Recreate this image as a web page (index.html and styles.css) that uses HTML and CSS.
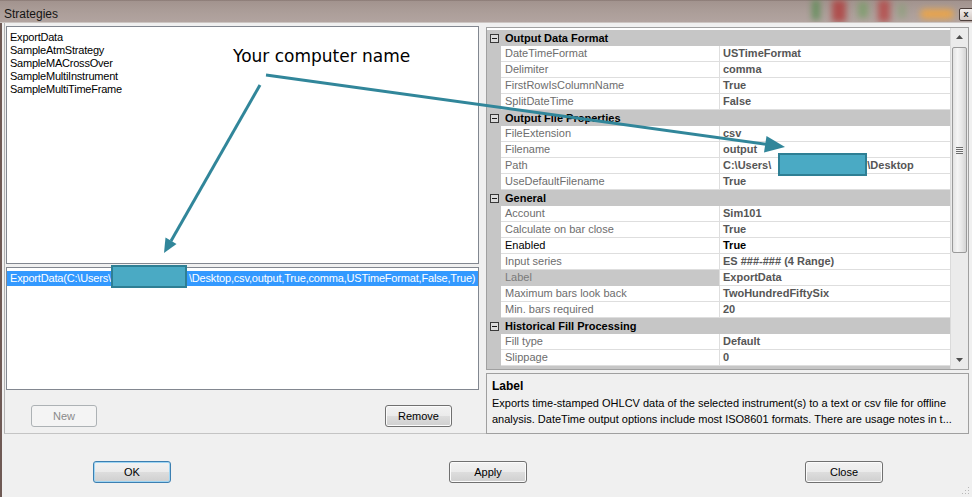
FILE: index.html
```html
<!DOCTYPE html>
<html>
<head>
<meta charset="utf-8">
<title>Strategies</title>
<link rel="stylesheet" href="styles.css">
</head>
<body>
<div class="window">
  <div class="titlebar">
    <div class="glass">
      <span class="blob b1"></span><span class="blob b2"></span><span class="blob b3"></span><span class="blob b4"></span><span class="blob b5"></span><span class="blob b6"></span>
    </div>
    <span class="title">Strategies</span>
    <span class="close-btn">x</span>
  </div>
  <div class="body">
    <div class="panes">
      <div class="left">
        <div class="list list-top">
          <div class="li">ExportData</div>
          <div class="li">SampleAtmStrategy</div>
          <div class="li">SampleMACrossOver</div>
          <div class="li">SampleMultiInstrument</div>
          <div class="li">SampleMultiTimeFrame</div>
        </div>
        <div class="list list-bottom">
          <div class="li sel">ExportData(C:\Users\<span class="gap1"></span>\Desktop,csv,output,True,comma,USTimeFormat,False,True)</div>
        </div>
        <div class="left-buttons">
          <button class="btn disabled btn-new">New</button>
          <button class="btn btn-remove">Remove</button>
        </div>
      </div>
      <div class="right">
        <div class="grid">
          <div class="rows">
            <div class="cat"><span class="minus"></span><span class="cat-name">Output Data Format</span></div>
            <div class="prop"><span class="mg"></span><span class="nm">DateTimeFormat</span><span class="vl">USTimeFormat</span></div>
            <div class="prop"><span class="mg"></span><span class="nm">Delimiter</span><span class="vl">comma</span></div>
            <div class="prop"><span class="mg"></span><span class="nm">FirstRowIsColumnName</span><span class="vl">True</span></div>
            <div class="prop"><span class="mg"></span><span class="nm">SplitDateTime</span><span class="vl">False</span></div>
            <div class="cat"><span class="minus"></span><span class="cat-name">Output File Properties</span></div>
            <div class="prop"><span class="mg"></span><span class="nm">FileExtension</span><span class="vl">csv</span></div>
            <div class="prop"><span class="mg"></span><span class="nm">Filename</span><span class="vl">output</span></div>
            <div class="prop"><span class="mg"></span><span class="nm">Path</span><span class="vl">C:\Users\<span class="gap2"></span>\Desktop</span></div>
            <div class="prop"><span class="mg"></span><span class="nm">UseDefaultFilename</span><span class="vl">True</span></div>
            <div class="cat"><span class="minus"></span><span class="cat-name">General</span></div>
            <div class="prop"><span class="mg"></span><span class="nm">Account</span><span class="vl">Sim101</span></div>
            <div class="prop"><span class="mg"></span><span class="nm">Calculate on bar close</span><span class="vl">True</span></div>
            <div class="prop strong"><span class="mg"></span><span class="nm">Enabled</span><span class="vl">True</span></div>
            <div class="prop"><span class="mg"></span><span class="nm">Input series</span><span class="vl">ES ###-### (4 Range)</span></div>
            <div class="prop selected"><span class="mg"></span><span class="nm">Label</span><span class="vl">ExportData</span></div>
            <div class="prop"><span class="mg"></span><span class="nm">Maximum bars look back</span><span class="vl">TwoHundredFiftySix</span></div>
            <div class="prop"><span class="mg"></span><span class="nm">Min. bars required</span><span class="vl">20</span></div>
            <div class="cat"><span class="minus"></span><span class="cat-name">Historical Fill Processing</span></div>
            <div class="prop"><span class="mg"></span><span class="nm">Fill type</span><span class="vl">Default</span></div>
            <div class="prop"><span class="mg"></span><span class="nm">Slippage</span><span class="vl">0</span></div>
            <div class="cat cat-last"><span class="minus"></span></div>
          </div>
          <div class="scrollbar">
            <div class="sb-arrow"><svg width="7" height="4" viewBox="0 0 7 4"><path d="M0 4 L3.5 0 L7 4 Z" fill="#4d4d4d"/></svg></div>
            <div class="sb-thumb"><span class="grip"></span></div>
            <div class="sb-space"></div>
            <div class="sb-arrow"><svg width="7" height="4" viewBox="0 0 7 4"><path d="M0 0 L3.5 4 L7 0 Z" fill="#4d4d4d"/></svg></div>
          </div>
        </div>
        <div class="desc">
          <div class="desc-title">Label</div>
          <div class="desc-text">Exports time-stamped OHLCV data of the selected instrument(s) to a text or csv file for offline analysis. DateTime output options include most ISO8601 formats. There are usage notes in t...</div>
        </div>
      </div>
    </div>
    <div class="footer">
      <button class="btn default btn-ok">OK</button>
      <button class="btn btn-apply">Apply</button>
      <button class="btn btn-close">Close</button>
      <svg class="grip-corner" width="8" height="8" viewBox="0 0 8 8">
        <rect x="6" y="0" width="1" height="1" fill="#b8b8b8"/>
        <rect x="3" y="3" width="1" height="1" fill="#b8b8b8"/><rect x="6" y="3" width="1" height="1" fill="#b8b8b8"/>
        <rect x="0" y="6" width="1" height="1" fill="#b8b8b8"/><rect x="3" y="6" width="1" height="1" fill="#b8b8b8"/><rect x="6" y="6" width="1" height="1" fill="#b8b8b8"/>
      </svg>
    </div>
  </div>

  <svg class="annot" width="972" height="497" viewBox="0 0 972 497">
    <line x1="260" y1="85" x2="171" y2="241" stroke="#31869a" stroke-width="3"/>
    <polygon points="164,253 176.5,244 165.5,237.5" fill="#31869a"/>
    <line x1="266" y1="75" x2="766" y2="144.3" stroke="#31869a" stroke-width="3"/>
    <polygon points="785,147 764,152.5 766.5,136" fill="#31869a"/>
    <rect x="112" y="266" width="74" height="21" fill="#4aaac4" stroke="#2e7f94" stroke-width="2"/>
    <rect x="779" y="154" width="87" height="21" fill="#4aaac4" stroke="#2e7f94" stroke-width="2"/>
  </svg>
  <div class="annot-text">Your computer name</div>
</div>
</body>
</html>
```

FILE: styles.css
```css
* { box-sizing: border-box; }
html, body { margin: 0; padding: 0; }
body {
  width: 972px;
  height: 497px;
  overflow: hidden;
  background: #f0f0f0;
  font-family: "Liberation Sans", Arial, sans-serif;
  font-size: 11px;
  color: #000;
}
.window {
  position: relative;
  width: 972px;
  height: 497px;
  background: #f0f0f0;
  overflow: hidden;
}

/* title bar */
.titlebar {
  position: relative;
  height: 23px;
  display: flex;
  align-items: flex-start;
  background: linear-gradient(to bottom, #7d6c67 0, #a2938e 1px, #ab9d98 50%, #b2a4a0 100%);
  border-bottom: 1px solid #cdc6c3;
  overflow: hidden;
}
.glass { position: absolute; left: 0; top: 0; width: 972px; height: 23px; }
.blob { position: absolute; display: block; filter: blur(3px); }
.b1 { left: 812px; top: 0; width: 8px; height: 20px; background: #4f8a4a; opacity: .7; }
.b2 { left: 832px; top: 0; width: 14px; height: 22px; background: #b03535; opacity: .75; }
.b3 { left: 858px; top: 2px; width: 10px; height: 16px; background: #6a9f5b; opacity: .6; }
.b4 { left: 878px; top: 0; width: 12px; height: 22px; background: #b83a3a; opacity: .7; }
.b5 { left: 898px; top: 4px; width: 8px; height: 14px; background: #7ea36e; opacity: .5; }
.b6 { left: 920px; top: 9px; width: 34px; height: 10px; background: #eea545; opacity: .9; border-radius: 5px; }
.title {
  position: relative;
  padding-left: 4px;
  padding-top: 2px;
  line-height: 24px;
  font-size: 12px;
  color: #141414;
}
.close-btn {
  position: relative;
  margin-left: auto;
  margin-top: 8px;
  margin-right: -4px;
  width: 17px;
  height: 13px;
  border: 1px solid #4d3f3b;
  border-radius: 2px;
  background: linear-gradient(#f2eeec, #d2c8c4);
  font-size: 9px;
  font-weight: bold;
  line-height: 10px;
  text-align: center;
  color: #222;
  padding-right: 3px;
}

/* body */
.body {
  border-left: 2px solid #6f5a55;
  padding-left: 2px;
}
.panes { display: flex; height: 411px; }
.left {
  width: 482px;
  height: 411px;
  border-left: 1px solid #b4b4b4;
  border-bottom: 1px solid #c4c4c4;
  padding: 3px 0 0 1px;
}
.list {
  width: 473px;
  background: #fff;
  border: 1px solid #828790;
  overflow: hidden;
}
.list-top { height: 238px; padding: 4px 0 0 3px; }
.li { line-height: 13px; height: 13px; letter-spacing: -0.22px; white-space: nowrap; }
.list-bottom { height: 123px; margin-top: 3px; padding-top: 3px; }
.li.sel {
  height: 15px;
  line-height: 15px;
  padding-left: 3px;
  background: #3399ff;
  color: #fff;
  letter-spacing: -0.18px;
}
.gap1 { display: inline-block; width: 78px; }
.left-buttons { display: flex; margin-top: 15px; height: 22px; }

.btn {
  height: 22px;
  padding: 0;
  border: 1px solid #707070;
  border-radius: 3px;
  background: linear-gradient(to bottom, #f2f2f2 0%, #ebebeb 48%, #dddddd 52%, #cfcfcf 100%);
  box-shadow: inset 0 0 0 1px #fbfbfb;
  font-family: "Liberation Sans", Arial, sans-serif;
  font-size: 11px;
  color: #000;
}
.btn.disabled {
  border-color: #adb2b5;
  background: #f4f4f4;
  box-shadow: none;
  color: #8a8a8a;
}
.btn.default {
  border-color: #3c7fb1;
  box-shadow: inset 0 0 0 1px #9fd5f3;
}
.btn-new { width: 66px; margin-left: 25px; }
.btn-remove { width: 67px; margin-left: 288px; }

/* right pane */
.right { width: 483px; padding-top: 4px; }
.grid {
  height: 343px;
  display: flex;
  border: 1px solid #a0a0a0;
  background: #fff;
}
.rows { width: 463px; padding-top: 2px; overflow: hidden; }
.cat {
  display: flex;
  align-items: center;
  height: 16px;
  background: #c6c6c6;
}
.cat-last { align-items: flex-start; }
.cat-last .minus { margin-top: 4px; }
.minus {
  position: relative;
  width: 9px;
  height: 9px;
  margin-left: 3px;
  border: 1px solid #3a3a3a;
  background: #dcdcdc;
  display: flex;
  align-items: center;
  justify-content: center;
}
.minus::after { content: ""; width: 5px; height: 1px; background: #1a1a1a; }
.cat-name { margin-left: 6px; font-weight: bold; color: #000; line-height: 16px; }
.prop { display: flex; height: 16px; }
.mg { width: 14px; background: #c6c6c6; }
.nm {
  width: 219px;
  padding-left: 4px;
  line-height: 15px;
  border-right: 1px solid #dedede;
  border-bottom: 1px solid #dedede;
  color: #6d6d6d;
  white-space: nowrap;
}
.vl {
  flex: 1;
  padding-left: 3px;
  line-height: 15px;
  border-bottom: 1px solid #dedede;
  font-weight: bold;
  color: #565656;
  white-space: nowrap;
}
.prop.strong .nm, .prop.strong .vl { color: #000; }
.prop.selected .nm { background: #c8c8c8; color: #7a7a7a; border-bottom-color: #c8c8c8; }
.gap2 { display: inline-block; width: 96px; }

.scrollbar {
  width: 18px;
  background: #ebebeb;
  border-left: 1px solid #dadada;
  display: flex;
  flex-direction: column;
  align-items: center;
}
.sb-arrow { width: 17px; height: 18px; display: flex; align-items: center; justify-content: center; }
.sb-thumb {
  width: 15px;
  height: 206px;
  margin-top: 1px;
  border: 1px solid #9a9a9a;
  border-radius: 2px;
  background: linear-gradient(to right, #e3e3e3 0%, #f5f5f5 35%, #e6e6e6 70%, #d4d4d4 100%);
  display: flex;
  align-items: center;
  justify-content: center;
}
.grip {
  width: 7px;
  height: 7px;
  background: repeating-linear-gradient(to bottom, #6c6c6c 0, #6c6c6c 1px, #f4f4f4 1px, #f4f4f4 2px);
}
.sb-space { flex: 1; }

.desc {
  height: 61px;
  margin-top: 3px;
  border: 1px solid #a0a0a0;
  background: #f0f0f0;
  padding: 4px 5px 0 5px;
  overflow: hidden;
}
.desc-title { font-size: 12px; font-weight: bold; line-height: 16px; color: #000; }
.desc-text { line-height: 16px; color: #000; width: 462px; margin-top: 1px; }

/* footer */
.footer { position: relative; display: flex; height: 63px; padding-top: 27px; }
.footer .btn { width: 78px; }
.btn-ok { margin-left: 89px; }
.btn-apply { margin-left: 278px; }
.btn-close { margin-left: 278px; }
.grip-corner { position: absolute; right: 2px; bottom: 2px; }

/* annotation overlay */
.annot { position: absolute; left: 0; top: 0; pointer-events: none; }
.annot-text {
  position: absolute;
  left: 233px;
  top: 46px;
  font-family: "DejaVu Sans", sans-serif;
  font-size: 17px;
  line-height: 20px;
  color: #000;
  white-space: nowrap;
}
```
